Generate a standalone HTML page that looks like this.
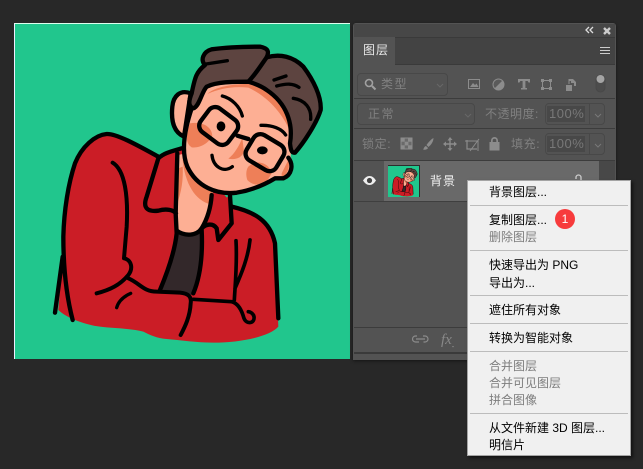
<!DOCTYPE html>
<html lang="zh"><head><meta charset="utf-8">
<style>
html,body{margin:0;padding:0;width:643px;height:469px;overflow:hidden;background:#282828}
body{position:relative;font-family:"Liberation Sans","WenQuanYi Zen Hei","Noto Sans CJK SC",sans-serif}
.a{position:absolute}
.t{position:absolute;white-space:nowrap;line-height:16px;font-size:12px}
.m{position:absolute;left:489px;white-space:nowrap;font-size:12px;line-height:16px;color:#000}
.d{color:#7d7d7d}
.s{position:absolute;left:470px;width:158px;height:1px;background:#bcbcbc}
.p{color:#808080;letter-spacing:1px}
.b{position:absolute;border:1px solid #484848;border-radius:4px;box-sizing:border-box}
.l{position:absolute;left:354px;width:261px;height:1px;background:#3c3c3c}
</style></head><body>
<div class="a" style="left:14px;top:23px;width:336px;height:336px;background:#21c68d;border-top:1px solid #dfe;border-left:1px solid #eef;box-sizing:border-box"></div>
<svg class="a" style="left:0;top:0" width="351" height="360" viewBox="0 0 351 360">
<defs><g id="art">
<g transform="translate(0,10) scale(.33333)" stroke-linecap="round" stroke-linejoin="round">
<path fill="#cb1d26" d="M175 900 C185 800 185 640 205 520 C225 430 265 375 320 368 C350 368 420 410 475 440 L545 410 L700 585 C760 600 815 630 825 700 L835 950 C810 980 720 998 640 998 C590 998 540 990 500 987 C470 985 450 975 430 965 C390 955 340 955 300 950 C260 945 200 925 175 900Z"/>
<path fill="#33282a" d="M530 670 L603 665 L605 770 L578 855 L480 838 L515 740Z"/>
<path fill="#fdaf94" d="M535 435 L555 430 L640 540 L632 600 L605 650 C590 672 555 678 533 660Z"/>
<path fill="#ee7f58" d="M548 450 C555 520 585 572 632 583 L640 530 L565 440Z M535 475 L530 585 C545 545 550 510 548 470Z"/>
<path fill="#cb1d26" d="M635 600 L690 555 L695 640 L655 690 L650 655 C640 640 620 640 606 655 C620 640 630 620 635 600Z"/>
<path fill="#fdaf94" stroke="#000" stroke-width="13" d="M572 250 C540 238 520 258 517 290 C512 340 525 368 552 380Z"/>
<path fill="#fdaf94" d="M575 290 L610 240 C650 215 720 215 760 220 C830 240 872 290 878 340 L872 440 C885 465 875 495 850 505 L825 505 C800 520 760 540 710 548 C650 555 590 530 562 470 C545 430 550 370 575 290Z"/>
<path fill="#ee7f58" d="M622 252 C650 225 720 222 747 222 C810 235 865 290 872 370 C850 310 800 258 745 233 C700 228 660 235 622 252Z"/>
<path fill="#ee7f58" d="M570 340 C600 335 635 345 637 378 C625 400 600 415 575 412 C555 400 558 370 570 340Z M745 470 C770 445 810 460 815 490 L800 515 C780 530 755 525 742 510 C737 495 738 480 745 470Z M727 385 C715 410 705 430 685 446 C705 450 725 445 732 425Z M845 505 C865 490 870 470 865 450 L845 490Z"/>
<path fill="#5d4440" d="M615 165 C600 150 610 125 635 118 C680 112 740 110 780 110 C805 115 808 125 800 142 C840 130 880 140 910 170 C940 210 965 260 962 300 C950 340 910 400 885 428 C875 430 872 420 870 400 C880 340 860 280 800 240 C780 225 760 220 745 215 C700 215 650 215 620 230 C605 245 598 290 580 295 C565 290 565 275 575 250 C585 200 590 185 615 165Z"/>
<g fill="none" stroke="#000" stroke-width="13">
<path d="M615 165 C600 150 610 125 635 118 C680 112 740 110 780 110 C805 115 808 125 800 142 C840 130 880 140 910 170 C940 210 965 260 962 300 C950 340 910 400 885 428 C875 430 872 420 870 400 C880 340 860 280 800 240 C780 225 760 220 745 215 C700 215 650 215 620 230 C605 245 598 290 580 295 C565 290 565 275 575 250 C585 200 590 185 615 165Z"/>
<path d="M800 142 C780 170 765 195 745 215"/>
<path d="M618 162 L682 152 M822 210 L858 198 M830 228 C860 220 880 220 897 232 M880 265 C915 270 935 295 932 328" stroke-width="10"/>
<path d="M575 295 C550 370 545 430 562 470 C590 530 650 555 710 548 C760 540 800 520 825 505 L850 505 C875 495 882 465 865 443"/>
<rect x="604" y="304" width="104" height="88" rx="24" transform="rotate(37 656 348)"/>
<rect x="743" y="384" width="104" height="88" rx="24" transform="rotate(31 795 428)"/>
<path d="M712 377 L745 387"/>
<path d="M667 258 C695 265 720 290 727 318 M783 346 C815 345 845 355 857 375" stroke-width="10"/>
<path d="M636 436 C640 470 670 490 697 470" stroke-width="10"/>
<path d="M165 908 L188 740 M218 930 C205 880 190 800 190 680 C192 600 205 520 225 460 C245 410 285 375 320 372 C350 370 420 410 475 440"/>
<path d="M695 590 C760 605 810 630 825 700 L835 925"/>
<path d="M545 415 C510 425 490 430 475 445 L440 560 C425 600 450 605 475 602 C500 595 520 600 528 610 M532 430 L527 610 L530 670 C525 720 505 780 480 840"/>
<path d="M635 555 C632 600 620 630 605 655 C590 678 555 680 530 662"/>
<path d="M690 555 L695 640 L655 690 L650 655 C640 640 620 640 605 655 M605 660 C608 720 605 790 580 850"/>
<path d="M338 458 C375 480 385 560 380 650 L372 745 C395 750 400 775 385 795 C360 825 330 840 290 850 M385 805 C420 820 430 845 470 845 L540 848 C565 850 575 860 572 880 C570 920 555 950 542 975" stroke-width="12"/>
<path d="M350 893 C355 875 370 860 392 850" stroke-width="10"/>
<path d="M580 868 L695 875 C715 880 725 900 732 925 C740 945 765 940 762 920 C760 910 750 905 745 905 M708 692 C712 760 705 830 703 870 M750 690 C745 740 725 790 705 835" stroke-width="11"/>
</g>
<ellipse cx="663" cy="349" rx="13" ry="15"/><ellipse cx="787" cy="421" rx="16" ry="12"/>
</g></g></defs>
<use href="#art"/>
</svg>

<!-- panel -->
<div class="a" style="left:353px;top:23px;width:263px;height:337px;background:#535353;border-radius:3px 3px 0 0;box-shadow:0 1px 3px rgba(0,0,0,.5)"></div>
<div class="a" style="left:354px;top:24px;width:261px;height:13px;background:#474747"></div>
<div class="a" style="left:354px;top:37px;width:261px;height:28px;background:#434343;border-top:1px solid #3a3a3a;border-bottom:1px solid #3a3a3a;box-sizing:border-box"></div>
<div class="a" style="left:354px;top:37px;width:41px;height:28px;background:#535353"></div>
<div class="t" style="left:363px;top:42px;color:#e8e8e8;letter-spacing:1px">图层</div>
<div class="l" style="top:98px"></div><div class="l" style="top:128px"></div><div class="l" style="top:160px"></div>

<div class="b" style="left:357px;top:73px;width:91px;height:23px"></div>
<div class="t p" style="left:381px;top:76px;letter-spacing:1.5px">类型</div>
<div class="b" style="left:357px;top:103px;width:118px;height:22px"></div>
<div class="t p" style="left:368px;top:106px;letter-spacing:1.5px">正常</div>
<div class="t p" style="left:485px;top:106px;letter-spacing:.5px">不透明度:</div>
<div class="b" style="left:545px;top:103px;width:60px;height:22px"></div>
<div class="a" style="left:547px;top:106px;width:38px;height:16px;background:#484848"></div>
<div class="a" style="left:589px;top:103px;width:1px;height:22px;background:#484848"></div>
<div class="t" style="left:549px;top:106px;color:#787878;letter-spacing:.5px;font-size:13px">100%</div>
<div class="t p" style="left:362px;top:136px;letter-spacing:.6px">锁定:</div>
<div class="t p" style="left:511px;top:136px;letter-spacing:.6px">填充:</div>
<div class="b" style="left:545px;top:133px;width:60px;height:22px"></div>
<div class="a" style="left:547px;top:136px;width:38px;height:16px;background:#484848"></div>
<div class="a" style="left:589px;top:133px;width:1px;height:22px;background:#484848"></div>
<div class="t" style="left:549px;top:136px;color:#787878;letter-spacing:.5px;font-size:13px">100%</div>

<!-- layer row -->
<div class="a" style="left:599px;top:161px;width:16px;height:40px;background:#484848"></div>
<div class="a" style="left:384px;top:161px;width:215px;height:40px;background:#696969"></div>
<div class="a" style="left:354px;top:201px;width:261px;height:1px;background:#3f3f3f"></div>
<div class="a" style="left:388px;top:165px;width:32px;height:32px;background:#21c68d;border-top:1px solid #2c2c2c;border-right:1px solid #2c2c2c;box-sizing:border-box;overflow:hidden">
<svg width="32" height="32" viewBox="14 23 336 336" style="display:block"><use href="#art"/></svg></div>
<div class="t" style="left:430px;top:173px;color:#f2f2f2;letter-spacing:1px">背景</div>

<!-- footer -->
<div class="a" style="left:354px;top:327px;width:261px;height:1px;background:#3c3c3c"></div>
<div class="a" style="left:354px;top:352px;width:261px;height:2px;background:#3a3a3a"></div>
<div class="t" style="left:441px;top:332px;color:#888;font:italic 15px 'Liberation Serif',serif;line-height:16px">fx</div>

<svg class="a" style="left:0;top:0" width="643" height="469" viewBox="0 0 643 469">
<!-- header icons -->
<path d="M589 27l-3 3 3 3M593 27l-3 3 3 3" fill="none" stroke="#ddd" stroke-width="1.3"/>
<path d="M604 28l6 6M610 28l-6 6" stroke="#ccc" stroke-width="2.4"/>
<path d="M600 47.5h10M600 50.5h10M600 53.5h10" stroke="#ccc" stroke-width="1"/>
<!-- search -->
<circle cx="369" cy="83" r="3.5" fill="none" stroke="#a0a0a0" stroke-width="1.6"/><path d="M372 86l3.5 3.5" stroke="#a0a0a0" stroke-width="2"/>
<path d="M437 84l3 3 3-3" fill="none" stroke="#686868"/><path d="M465 114l3 3 3-3" fill="none" stroke="#686868"/>
<path d="M595 114l3 3 3-3" fill="none" stroke="#787878"/><path d="M595 144l3 3 3-3" fill="none" stroke="#787878"/>
<!-- filter icons -->
<g fill="#8c8c8c">
<rect x="468.500" y="79.500" width="11" height="9" fill="none" stroke="#8c8c8c"/>
<path d="M470 87l3-4 2 2 1.500-1.500 2 3.500z"/>
<circle cx="498.500" cy="84.500" r="5.500" fill="#5a5a5a" stroke="#8c8c8c"/>
<path d="M494.600 88.400a5.500 5.500 0 0 1 7.800-7.800z" transform="rotate(180 498.500 84.500)"/>
<path d="M518 79h12v3.500h-1.500l-.8-1.500H525.400v7h1.600v1.500h-6v-1.500h1.600v-7H520.300l-.8 1.500H518z"/>
<rect x="542.500" y="80.500" width="8" height="8" fill="none" stroke="#8c8c8c"/>
<rect x="541" y="79" width="3" height="3"/><rect x="549" y="79" width="3" height="3"/><rect x="541" y="87" width="3" height="3"/><rect x="549" y="87" width="3" height="3"/>
<path d="M569 79h4l3 3v4h-2v-3h-3v-2h-2z"/><rect x="566" y="85" width="6" height="6"/><path d="M569 79v5" stroke="#8c8c8c"/>
<rect x="596" y="75" width="9" height="17" rx="4.500" fill="#4c4c4c" stroke="#484848"/>
<circle cx="600.500" cy="79" r="4" fill="#a4a4a4"/>
</g>
<!-- lock row icons -->
<g fill="#8c8c8c">
<rect x="401" y="138" width="11" height="11" fill="#6a6a6a" stroke="#8c8c8c"/>
<rect x="401" y="138" width="3.700" height="3.700"/><rect x="408" y="138" width="3.700" height="3.700"/><rect x="404.700" y="141.700" width="3.700" height="3.700"/><rect x="401" y="145.300" width="3.700" height="3.700"/><rect x="408" y="145.300" width="3.700" height="3.700"/>
<path d="M433.500 138c-1.500.5-5 4-7 7l2 2c2.500-2 5-5.500 5-9zM426 146c-2 .5-2 2.500-3 3.500 2 .5 4.500 0 5-1.500z"/>
<path d="M450 137l2.500 3h-1.800v3.300H454V141.500l3 2.500-3 2.500v-1.700h-3.300v3.300h1.800L450 151l-2.500-2.900h1.800v-3.300H446v1.700l-3-2.500 3-2.500v1.800h3.300V140.500h-1.800z"/>
<path d="M467 140v9h10" fill="none" stroke="#8c8c8c" stroke-width="1.200"/><path d="M465 141h13v10M470 151l9-12" fill="none" stroke="#8c8c8c"/>
<path d="M491 142v-1.500a3.500 3.500 0 0 1 7 0V142h1.500v8.500h-10V142zm1.700 0h3.600v-1.500a1.800 1.800 0 0 0-3.600 0z"/>
<path d="M363 180.500c2-3 4-4.500 6.500-4.500s4.500 1.500 6.500 4.500c-2 3-4 4.500-6.500 4.500s-4.500-1.500-6.500-4.500z" fill="#eee"/>
</g>
<circle cx="369.500" cy="180.500" r="2.600" fill="#444"/>
<path d="M576 179v-1.500a2.500 2.500 0 0 1 5 0V180" fill="none" stroke="#ccc" stroke-width="1.300"/>
<!-- link -->
<path d="M417 336h-1.500a3 3 0 0 0 0 6H419M423 336h2a3 3 0 0 1 0 6h-1.500M416 339h9" fill="none" stroke="#8c8c8c" stroke-width="1.200"/>
<path d="M452 346h2l-1 1.500z" fill="#888"/>
</svg>

<!-- context menu -->
<div class="a" style="left:467px;top:180px;width:164px;height:276px;background:#f0f0f0;border:1px solid #a4a4a4;box-sizing:border-box;box-shadow:2px 2px 3px rgba(0,0,0,.55)"></div>
<div class="m" style="top:184px">背景图层...</div>
<div class="s" style="top:205px"></div>
<div class="m" style="top:212px">复制图层...</div>
<div class="m d" style="top:229px">删除图层</div>
<div class="s" style="top:250px"></div>
<div class="m" style="top:257px">快速导出为 PNG</div>
<div class="m" style="top:275px">导出为...</div>
<div class="s" style="top:295px"></div>
<div class="m" style="top:302px">遮住所有对象</div>
<div class="s" style="top:323px"></div>
<div class="m" style="top:330px">转换为智能对象</div>
<div class="s" style="top:351px"></div>
<div class="m d" style="top:358px">合并图层</div>
<div class="m d" style="top:375px">合并可见图层</div>
<div class="m d" style="top:392px">拼合图像</div>
<div class="s" style="top:413px"></div>
<div class="m" style="top:420px">从文件新建 3D 图层...</div>
<div class="m" style="top:437px">明信片</div>
<div class="a" style="left:555px;top:209px;width:20px;height:20px;border-radius:50%;background:#f73b3c;color:#fff;font-size:12px;line-height:20px;text-align:center">1</div>
</body></html>
